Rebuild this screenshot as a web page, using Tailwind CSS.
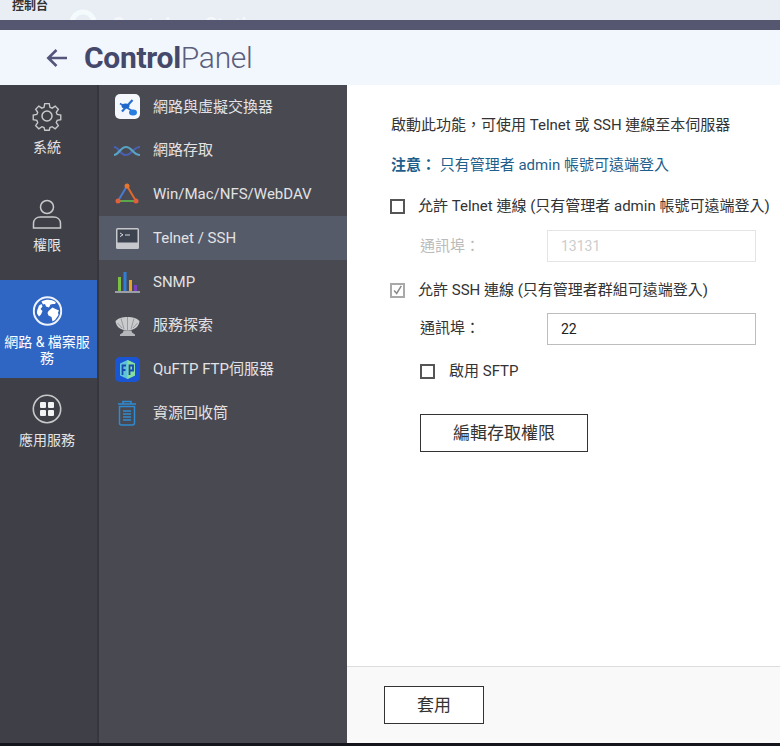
<!DOCTYPE html>
<html lang="zh-Hant">

<head>
    <meta charset="UTF-8">
    <title>ControlPanel - Telnet / SSH</title>
    <script src="https://cdn.jsdelivr.net/npm/@tailwindcss/browser@4"></script>
</head>

<body class="w-[780px] h-[746px] overflow-hidden flex flex-col bg-[#14141c] font-['Roboto','Noto_Sans_CJK_TC',sans-serif] text-[15px] text-[#333]">
    <!-- desktop strip behind the window -->
    <div class="h-5 shrink-0 overflow-hidden bg-[#e9eef4] flex items-start pl-3 relative">
        <span class="text-[12px] leading-[13px] font-bold text-[#333]">控制台</span>
        <svg class="absolute left-[66px] top-[9px]" width="34" height="11" viewBox="0 0 34 11" fill="none" stroke="#f4fbfd" stroke-width="5"><circle cx="17" cy="14" r="11" /></svg>
        <span class="absolute left-[112px] top-[13px] text-[20px] leading-6 font-bold text-[#f5f7fa]">Container Station</span>
    </div>
    <div class="h-[10px] shrink-0 bg-[#555770]"></div>

    <!-- header -->
    <header class="h-[55px] shrink-0 bg-[#f2f6fd] flex items-center pl-[46px]">
        <svg width="22" height="20" viewBox="0 0 22 20" fill="none" stroke="#53567a" stroke-width="2.6" class="mt-[1px]">
            <path d="M21 10H2M10.500 2L2.300 10L10.500 18" />
        </svg>
        <h1 class="ml-[16px] text-[30px] leading-none text-[#44486a] tracking-[-0.3px]"><span class="font-bold">Control</span><span class="font-light text-[#5a5e7c]">Panel</span></h1>
    </header>

    <div class="h-[658px] shrink-0 flex">
        <!-- first level menu -->
        <nav class="w-[97px] shrink-0 bg-[#3f4047] text-[14px] text-[#e4e4e6] text-center">
            <div class="h-[97.5px] pt-[16px] pr-[3px] flex flex-col items-center">
                <svg width="30" height="30" viewBox="0 0 30 30" fill="none" stroke="#c9c9cc" stroke-width="1.500">
                    <path d="M12.500 1.500h5l.8 4 2.400 1 3.400-2.300 3.500 3.500-2.300 3.400 1 2.400 4 .8v5l-4 .8-1 2.400 2.300 3.400-3.500 3.500-3.400-2.300-2.400 1-.8 3h-5l-.8-3-2.400-1-3.400 2.300-3.500-3.500 2.300-3.400-1-2.400-4-.8v-5l4-.8 1-2.400-2.300-3.400 3.500-3.500 3.400 2.300 2.400-1z" transform="translate(1.500 1.300) scale(.9)" />
                    <circle cx="15" cy="15" r="5" />
                </svg>
                <span class="mt-[7px] leading-[18px]">系統</span>
            </div>
            <div class="h-[97.5px] pt-[15px] pr-[3px] flex flex-col items-center">
                <svg width="30" height="32" viewBox="0 0 30 32" fill="none" stroke="#c9c9cc" stroke-width="1.500">
                    <circle cx="15" cy="9" r="6.500" />
                    <path d="M1.500 30v-4.500c0-4 3-6.500 7-6.500h13c4 0 7 2.500 7 6.500V30z" />
                </svg>
                <span class="mt-[6px] leading-[18px]">權限</span>
            </div>
            <div class="h-[97.5px] pt-[16px] flex flex-col items-center bg-[#2f66c4] text-white">
                <svg width="30" height="30" viewBox="0 0 30 30" class="-translate-x-[1.500px]">
                    <circle cx="15" cy="15" r="13.700" fill="#2f66c4" stroke="#eef3fb" stroke-width="2" />
                    <path d="M9 5.500c4-2.500 10-2.500 14 .5 1 1-.5 2.500-2.500 2L18 8.500l-1.500 3-3-1-1-2.500-2 .5z" fill="#fff" />
                    <path d="M16 15l4-3.500 3 1.500 3.500 1.500-1 2 .5 2.500-3.500 5-2.500 1.500-1-4.500-3-1.500-1-2.500z" fill="#fff" />
                    <path d="M4.500 15l2-5.500 2.500-1.500 1 2.500-2 2.500 2 2-1.500 3.500-2 2-2-3z" fill="#fff" />
                </svg>
                <span class="mt-[8px] leading-[16px] w-[90px] -translate-x-[1.500px]">網路 & 檔案服務</span>
            </div>
            <div class="pt-[16px] pr-[3px] flex flex-col items-center">
                <svg width="30" height="30" viewBox="0 0 30 30">
                    <circle cx="15" cy="15" r="13.700" fill="none" stroke="#c9c9cc" stroke-width="1.600" />
                    <rect x="8" y="8" width="6" height="6" rx="1" fill="#f2f2f3" />
                    <rect x="16" y="8" width="6" height="6" rx="1" fill="#f2f2f3" />
                    <rect x="8" y="16" width="6" height="6" rx="1" fill="#f2f2f3" />
                    <rect x="16" y="16" width="6" height="6" rx="1" fill="#f2f2f3" />
                </svg>
                <span class="mt-[7px] leading-[18px]">應用服務</span>
            </div>
        </nav>
        <div class="w-[2px] shrink-0 bg-[#36363c]"></div>

        <!-- second level menu -->
        <nav class="w-[248px] shrink-0 bg-[#494951] text-[15px] text-[#e2e2e4]">
            <div class="h-[43.75px] flex items-center">
                <div class="w-[54px] pl-[2px] flex justify-center">
                    <svg width="25" height="25" viewBox="0 0 25 25">
                        <rect width="25" height="25" rx="5" fill="#f4f7fc" />
                        <path d="M7 17.500L17.500 6" stroke="#2a6fd0" stroke-width="2.200" />
                        <path d="M5 9.500l14 8.500" stroke="#2a6fd0" stroke-width="1.600" />
                        <ellipse cx="10.500" cy="12" rx="4" ry="2.500" fill="#1f66cc" />
                        <ellipse cx="18" cy="18.500" rx="4" ry="3" fill="#2a7de0" />
                    </svg>
                </div>
                <span>網路與虛擬交換器</span>
            </div>
            <div class="h-[43.75px] flex items-center">
                <div class="w-[54px] pl-[2px] flex justify-center">
                    <svg width="26" height="14" viewBox="0 0 26 14" fill="none" stroke-width="2.200">
                        <path d="M0 3c5 0 6 8 12 8s7-8 14-8" stroke="#4a5fae" />
                        <path d="M0 11c5 0 6-8 12-8s7 8 14 8" stroke="#58a3c4" />
                    </svg>
                </div>
                <span>網路存取</span>
            </div>
            <div class="h-[43.75px] flex items-center">
                <div class="w-[54px] pl-[2px] flex justify-center">
                    <svg width="24" height="22" viewBox="0 0 24 22" fill="none" stroke-width="2">
                        <path d="M12 3L3 18" stroke="#4a7bd0" />
                        <path d="M12 3l9 15" stroke="#e0692c" />
                        <path d="M3 18h18" stroke="#5aa84a" />
                        <circle cx="12" cy="3" r="2.500" fill="#e8752f" stroke="none" />
                        <circle cx="3" cy="18" r="2.500" fill="#e0603c" stroke="none" />
                        <circle cx="21" cy="18" r="2.500" fill="#e0603c" stroke="none" />
                    </svg>
                </div>
                <span>Win/Mac/NFS/WebDAV</span>
            </div>
            <div class="h-[43.75px] flex items-center bg-[#555b69]">
                <div class="w-[54px] pl-[2px] flex justify-center">
                    <svg width="23" height="21" viewBox="0 0 23 21">
                        <rect width="23" height="21" rx="1.500" fill="#c6c8cc" />
                        <rect x="1.500" y="1.500" width="20" height="13" fill="#3d4450" />
                        <path d="M4 5l3 1.800L4 8.600" fill="none" stroke="#d5d7da" />
                        <path d="M9 7h5" stroke="#d5d7da" />
                    </svg>
                </div>
                <span>Telnet / SSH</span>
            </div>
            <div class="h-[43.75px] flex items-center">
                <div class="w-[54px] pl-[2px] flex justify-center">
                    <svg width="25" height="22" viewBox="0 0 25 22">
                        <rect x="3" y="6" width="3" height="14" fill="#7bc043" />
                        <rect x="8.500" y="1" width="3" height="19" fill="#2f7fd8" />
                        <rect x="14" y="9" width="3" height="11" fill="#e8a32c" />
                        <rect x="19" y="14" width="3" height="6" fill="#7b3fc4" />
                        <rect y="20" width="25" height="2" fill="#9aa0a6" />
                    </svg>
                </div>
                <span>SNMP</span>
            </div>
            <div class="h-[43.75px] flex items-center">
                <div class="w-[54px] pl-[2px] flex justify-center">
                    <svg width="25" height="20" viewBox="0 0 25 20">
                        <path d="M.5 5C5-.5 20-.5 24.500 5c-.5 6-5.500 9.500-12 9.500S1 11 .5 5z" fill="#c9cbcd" />
                        <path d="M6 2.500L9 13M12.500 1v13M19 2.500L16 13M2.500 7l4.500 5M22.500 7L18 12" stroke="#97999d" />
                        <path d="M8.500 14.500h8l.5 2 3 2v1.500H5v-1.500l3-2z" fill="#b5b7ba" />
                    </svg>
                </div>
                <span>服務探索</span>
            </div>
            <div class="h-[43.75px] flex items-center">
                <div class="w-[54px] pl-[2px] flex justify-center">
                    <svg width="25" height="25" viewBox="0 0 25 25">
                        <rect width="25" height="25" rx="5" fill="#1a55d4" />
                        <path d="M5 6.500L12.500 3 20 6.500v12L12.500 22 5 18.500z" fill="#5fc4d8" />
                        <path d="M12.500 3L20 6.500v12L12.500 22z" fill="#86dfa0" />
                        <path d="M7.500 18V8.500h3.500M7.500 13h3M14.500 18V8.500h3.500v5h-3.500" fill="none" stroke="#1848b0" stroke-width="1.800" />
                    </svg>
                </div>
                <span>QuFTP FTP伺服器</span>
            </div>
            <div class="h-[43.75px] flex items-center">
                <div class="w-[54px] pl-[2px] flex justify-center">
                    <svg width="20" height="26" viewBox="0 0 20 26" fill="none" stroke="#2f8ad0" stroke-width="1.500">
                        <path d="M1 4h18M6 3.500V1.500h8v2" />
                        <path d="M2.500 6.500h15V23a2 2 0 0 1-2 2h-11a2 2 0 0 1-2-2z" />
                        <path d="M6 11h8M6 14h8M6 17h8M6 20h8" />
                    </svg>
                </div>
                <span>資源回收筒</span>
            </div>
        </nav>

        <!-- settings -->
        <main class="flex-1 bg-white flex flex-col">
            <div class="flex-1 pl-[44px] pt-[30px]">
                <p class="leading-5">啟動此功能，可使用 Telnet 或 SSH 連線至本伺服器</p>
                <p class="mt-[20px] leading-5 text-[#1f5f8b]"><span class="font-bold">注意：</span> 只有管理者 admin 帳號可遠端登入</p>

                <label class="mt-[21px] -ml-px flex items-center gap-[13px] leading-5 whitespace-nowrap">
                    <span class="size-[15px] border-2 border-[#555] bg-white shrink-0"></span>
                    <span>允許 Telnet 連線 (只有管理者 admin 帳號可遠端登入)</span>
                </label>
                <div class="mt-[14px] ml-[29px] flex items-center text-[#bbb]">
                    <span class="w-[127px]">通訊埠：</span>
                    <div class="w-[209px] h-[32px] border border-[#e4e4e4] pl-[13px] flex items-center text-[14px] text-[#ccc]">13131</div>
                </div>

                <label class="mt-[18px] -ml-px flex items-center gap-[13px] leading-5 whitespace-nowrap">
                    <span class="size-[15px] border-2 border-[#a9a9a9] bg-white shrink-0 flex items-center justify-center">
                        <svg width="13" height="13" viewBox="0 0 13 13" fill="none" stroke="#8a8a8a" stroke-width="1.800"><path d="M2.500 6.500l3 3.500 5.500-9" /></svg>
                    </span>
                    <span>允許 SSH 連線 (只有管理者群組可遠端登入)</span>
                </label>
                <div class="mt-[13px] ml-[29px] flex items-center">
                    <span class="w-[127px] -mt-[2px]">通訊埠：</span>
                    <div class="w-[209px] h-[32px] border border-[#bdbdbd] pl-[13px] flex items-center text-[14px] text-[#222]">22</div>
                </div>
                <label class="mt-[16px] ml-[29px] flex items-center gap-[14px] leading-5">
                    <span class="size-[15px] border-2 border-[#555] bg-white shrink-0"></span>
                    <span>啟用 SFTP</span>
                </label>
                <button class="mt-[33px] ml-[29px] block w-[168px] h-[38px] pt-[2px] border border-[#333] text-[17px] text-[#333]">編輯存取權限</button>
            </div>
            <footer class="h-[77px] shrink-0 bg-[#f9f9f9] border-t border-[#dddddd] pl-[37px] pt-[19px]">
                <button class="block w-[100px] h-[38px] pt-[2px] border border-[#333] bg-white text-[17px] text-[#333]">套用</button>
            </footer>
        </main>
    </div>
    <div class="flex-1 bg-[#14141c]"></div>
</body>

</html>
